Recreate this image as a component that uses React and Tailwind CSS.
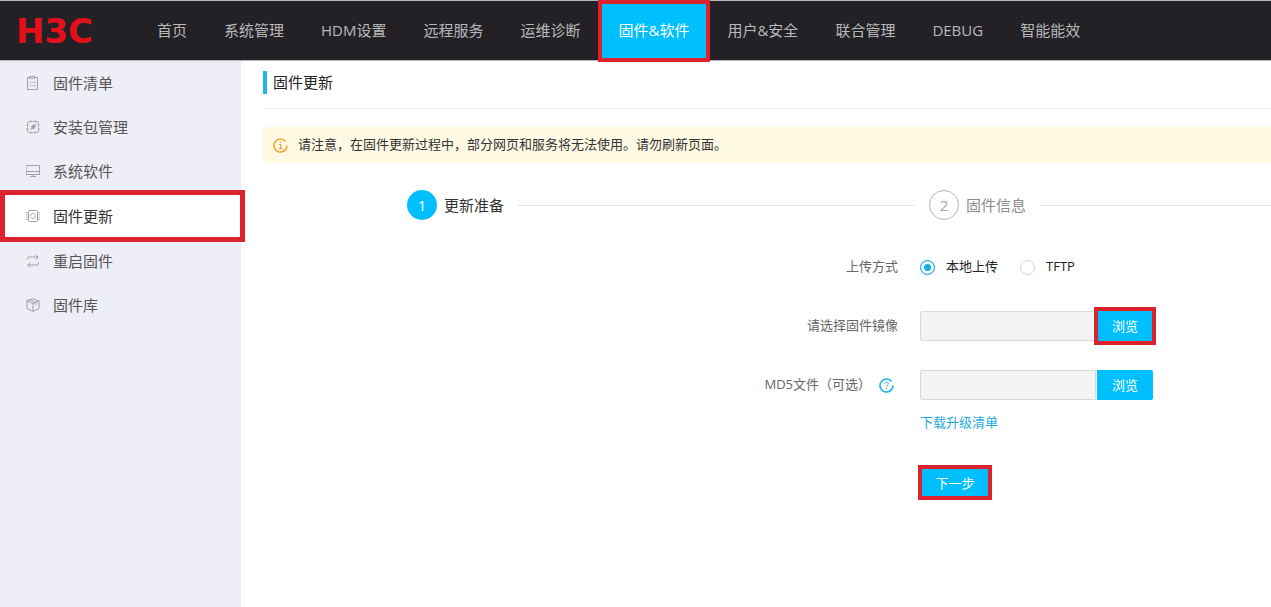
import { useState } from 'react'

const menus = ['首页', '系统管理', 'HDM设置', '远程服务', '运维诊断', '固件&软件', '用户&安全', '联合管理', 'DEBUG', '智能能效']

const sideItems = [
  { name: 'list', text: '固件清单', icon: ListIcon },
  { name: 'package', text: '安装包管理', icon: PackageIcon },
  { name: 'software', text: '系统软件', icon: ScreenIcon },
  { name: 'update', text: '固件更新', icon: ChipIcon },
  { name: 'restart', text: '重启固件', icon: RestartIcon },
  { name: 'library', text: '固件库', icon: BoxIcon }
]

const primaryButton = 'bg-[#00bfff] text-[13px] leading-5 text-white cursor-pointer'

function Icon({ children }) {
  return (
    <svg width="14" height="14" viewBox="0 0 14 14" fill="none" stroke="currentColor" strokeWidth="1" strokeLinecap="round" strokeLinejoin="round" className="shrink-0" aria-hidden="true">
      {children}
    </svg>
  )
}

function ListIcon() {
  return (
    <Icon>
      <path d="M4 1.500H1.500v12h10v-12H9" />
      <path d="M4 .5h5v1.800H4z" />
      <path d="M3.500 6l.8.800L5.500 5.500M7 6.200h2.500M3.500 9.300l.8.800 1.200-1.300M7 9.500h2.500" strokeWidth=".8" />
    </Icon>
  )
}

function PackageIcon() {
  return (
    <Icon>
      <path d="M5 1.500H3.500a2 2 0 0 0-2 2V5M9 1.500h1.500a2 2 0 0 1 2 2V5M5 12.500H3.500a2 2 0 0 1-2-2V9M9 12.500h1.500a2 2 0 0 0 2-2V9" />
      <path d="M5 .5v1.500M9 .5v1.500M5 12v1.500M9 12v1.500M.5 5H2M.5 9H2M12 5h1.500M12 9h1.500M5 1.500h4M5 12.500h4M1.500 5v4M12.500 5v4" strokeWidth=".7" />
      <path d="M9.800 4L6.600 5.200 4.800 6.700l1.200.5-1.800 2.600 2.700-1.600.6 1.200L9 7.300z" fill="currentColor" strokeWidth=".4" />
    </Icon>
  )
}

function ScreenIcon() {
  return (
    <Icon>
      <rect x=".5" y="1.500" width="13" height="9" />
      <path d="M.5 7.500h13M7 10.500v2M4.500 12.500h5" />
    </Icon>
  )
}

function ChipIcon() {
  return (
    <Icon>
      <rect x="2.500" y="1.500" width="9" height="11" rx="1" />
      <path d="M.5 3.500h2M.5 5.800h2M.5 8.200h2M.5 10.500h2M11.500 3.500h2M11.500 5.800h2M11.500 8.200h2M11.500 10.500h2" strokeWidth=".8" />
      <path d="M9.300 5.700a2.600 2.600 0 0 0-4.900 1.300M4.700 8.300A2.600 2.600 0 0 0 9.600 7" strokeWidth=".9" />
    </Icon>
  )
}

function RestartIcon() {
  return (
    <Icon>
      <path d="M1.500 5.500V4.500A1.500 1.500 0 0 1 3 3h9M10 .8L12 3l-2 2.200" />
      <path d="M12.500 8.500v1A1.500 1.500 0 0 1 11 11H2M4 8.800L2 11l2 2.200" />
    </Icon>
  )
}

function BoxIcon() {
  return (
    <Icon>
      <path d="M7 .8l6 2.200v7.600l-6 2.700-6-2.700V3z" />
      <path d="M1 3l6 2.500L13 3M7 5.500v7.800M4 2l6 2.300v2.500" />
    </Icon>
  )
}

// open ring with the break on the right side
function RingIcon({ children }) {
  return (
    <svg width="15" height="15" viewBox="0 0 15 15" fill="none" stroke="currentColor" strokeWidth="1.600" className="shrink-0" aria-hidden="true">
      <path d="M12.600 3.500A6.500 6.500 0 1 0 14 7.500" />
      {children}
    </svg>
  )
}

// red frame around the spots the operator has to click
function Mark({ className }) {
  return <span className={`pointer-events-none absolute z-10 border-[#dc232d] ${className}`} />
}

function FileRow({ id, label, help, marked }) {
  return (
    <>
      <label htmlFor={id} className="flex items-center justify-end text-[13px] text-[#666]">
        {label}
        {help && <span className="ml-2 mr-1 text-[#1eb4e6]">{help}</span>}
      </label>
      <div className="flex gap-px">
        <input id={id} type="text" readOnly className="h-[30px] w-44 rounded-l-xs border border-[#d9d9d9] bg-[#f4f4f4] px-2 text-[13px] outline-none" />
        <div className="relative">
          <button type="button" className={`${primaryButton} h-[30px] w-14 rounded-r-xs`}>浏览</button>
          {marked && <Mark className="-inset-x-[3px] -inset-y-1 border-4" />}
        </div>
      </div>
    </>
  )
}

function Header() {
  const current = '固件&软件'
  return (
    <header className="flex h-[61px] items-end border-y border-[#b4b4b8] bg-[#232126]">
      <a href="#" className="flex h-[59px] w-[139px] shrink-0 items-center pl-4 font-['DejaVu_Sans'] text-[34px] font-bold leading-none text-[#e3101b]">H3C</a>
      <nav className="flex gap-px whitespace-nowrap">
        {menus.map((text) => (
          <div key={text} className="relative">
            <a href="#" className={`flex h-[59px] items-center text-[15px] ${text === current ? 'bg-[#00bfff] px-[19px] text-white' : 'px-[18px] text-[#b9b9bb]'}`}>{text}</a>
            {text === current && <Mark className="-inset-x-0.5 -bottom-0.5 -top-px border-4" />}
          </div>
        ))}
      </nav>
    </header>
  )
}

function Sidebar() {
  return (
    <aside className="w-[241px] shrink-0 bg-[#eeeef7]">
      {sideItems.map(({ name, text, icon: ItemIcon }) => {
        const active = name === 'update'
        return (
          <a key={name} href="#" className={`relative flex items-center gap-[13px] pl-[26px] text-[15px] ${active ? 'h-[46px] bg-white text-[#333]' : 'h-11 text-[#555]'}`}>
            <span className="text-[#a0a0a6]"><ItemIcon /></span>
            {text}
            {active && <Mark className="-inset-y-[3px] left-0 -right-1 border-[5px]" />}
          </a>
        )
      })}
    </aside>
  )
}

const radioClass = 'size-[15px] appearance-none rounded-full border border-[#d5d5d5] bg-white checked:border-[#1eb4e6] checked:bg-[#12aee6] checked:shadow-[inset_0_0_0_3px_white]'

const App = () => {
  const [mode, setMode] = useState('local')

  return (
    <div className="flex min-h-screen flex-col overflow-hidden bg-white font-['Open_Sans','Noto_Sans_CJK_SC',sans-serif]">
      <Header />
      <div className="flex flex-1">
        <Sidebar />
        <main className="min-w-0 flex-1 pl-[22px]">
          <div className="flex h-12 items-center border-b border-[#ebebeb]">
            <span className="mb-1 mr-1.5 h-[23px] w-1 bg-[#1eb4e6]" />
            <h1 className="mb-1 text-[15px] text-[#222]">固件更新</h1>
          </div>

          <div className="mt-[18px] flex h-9 items-center gap-[10px] bg-[#fefae4] pl-[10px] text-[13px] text-[#333]">
            <span className="text-[#eda436]">
              <RingIcon><path d="M7.500 3.500v1.600M6 6.500h1.700v4M5.700 10.700h3.800" strokeWidth="1.200" /></RingIcon>
            </span>
            <p>请注意，在固件更新过程中，部分网页和服务将无法使用。请勿刷新页面。</p>
          </div>

          <ol className="ml-36 mt-[27px] flex gap-[14px] whitespace-nowrap text-[15px]">
            <li className="flex w-[508px] items-center text-[#333]">
              <span className="mr-[7px] flex size-[30px] items-center justify-center rounded-full bg-[#00bfff] text-white">1</span>
              更新准备
              <span className="ml-3.5 h-px flex-1 bg-[#e4e4e4]" />
            </li>
            <li className="flex flex-1 items-center text-[#8c8c8c]">
              <span className="mr-[7px] flex size-[30px] items-center justify-center rounded-full border border-[#b5b5b5] text-[#a5a5a5]">2</span>
              固件信息
              <span className="ml-3.5 h-px flex-1 bg-[#e4e4e4]" />
            </li>
          </ol>

          <form className="mt-8 grid grid-cols-[63%_1fr] gap-x-[22px]" onSubmit={(e) => e.preventDefault()}>
            <span id="mode-label" className="flex h-[30px] items-center justify-end text-[13px] text-[#666]">上传方式</span>
            <div role="radiogroup" aria-labelledby="mode-label" className="mb-[29px] flex h-[30px] items-center gap-[22px] text-[13px] text-[#222]">
              <label className="flex items-center gap-[11px]">
                <input type="radio" name="mode" className={radioClass} checked={mode === 'local'} onChange={() => setMode('local')} />
                本地上传
              </label>
              <label className="flex items-center gap-[11px]">
                <input type="radio" name="mode" className={radioClass} checked={mode === 'tftp'} onChange={() => setMode('tftp')} />
                TFTP
              </label>
            </div>

            <FileRow id="image" label="请选择固件镜像" marked />
            <div className="col-span-2 h-[29px]" />
            <FileRow
              id="md5"
              label="MD5文件（可选）"
              help={<RingIcon><path d="M5.900 5.700a1.700 1.700 0 1 1 2.400 1.500c-.6.300-.8.600-.8 1.300M7.500 9.700v1.300" strokeWidth="1" /></RingIcon>}
            />

            <div className="col-start-2 mt-3">
              <a href="#" className="block w-fit text-[13px] leading-5 text-[#1eaadc]">下载升级清单</a>
              <div className="relative mt-9 w-fit">
                <button type="submit" className={`${primaryButton} h-[30px] w-[70px]`}>下一步</button>
                <Mark className="-inset-x-0.5 -bottom-0.5 -top-[3px] border-4" />
              </div>
            </div>
          </form>
        </main>
      </div>
    </div>
  )
}

export default App
